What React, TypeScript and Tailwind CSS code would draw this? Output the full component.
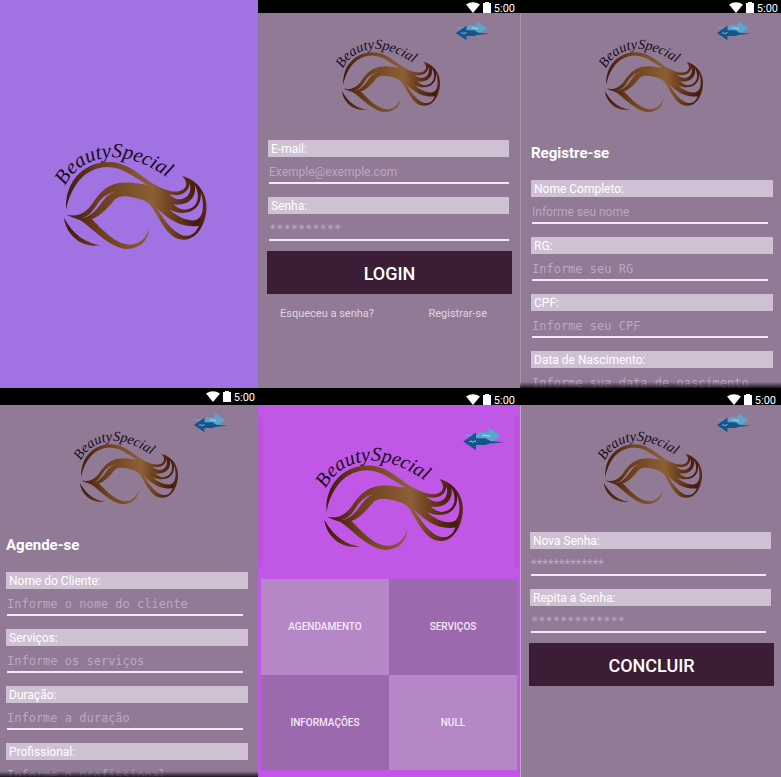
import { useId } from "react";
import type { ReactNode } from "react";

const roboto = "font-[Roboto,'Liberation_Sans',sans-serif]";
const mono = "font-['DejaVu_Sans_Mono','Liberation_Mono',monospace] text-[12px]";

function Logo({ className }: { className: string }) {
  const id = useId();
  const arc = `${id}-arc`;
  const bronze = `${id}-bronze`;
  const fill = `url(#${bronze})`;
  return (
    <svg viewBox="30 30 480 340" className={`overflow-visible ${className}`} role="img" aria-label="BeautySpecial">
      <defs>
        <linearGradient id={bronze} gradientUnits="userSpaceOnUse" x1="68" y1="0" x2="500" y2="0">
          <stop offset="0" stopColor="#3f180c" />
          <stop offset="0.25" stopColor="#6b3d1c" />
          <stop offset="0.62" stopColor="#8c6036" />
          <stop offset="0.8" stopColor="#613315" />
          <stop offset="0.93" stopColor="#45190f" />
          <stop offset="1" stopColor="#5c2c18" />
        </linearGradient>
        <path id={arc} d="M72 168 C102 108 160 82 222 82 C288 86 336 112 420 170" />
      </defs>
      <text className="font-['Liberation_Serif',serif] text-[62px] italic" fill="#150c18">
        <textPath href={`#${arc}`}>BeautySpecial</textPath>
      </text>
      <path
        fill={fill}
        fillRule="evenodd"
        d="M76 255 C112 262 134 248 152 224 C178 184 204 159 250 158 C282 157 300 164 318 164
           C280 142 246 112 200 111 C130 112 88 170 75 240 C69 166 118 96 205 96
           C265 97 302 142 345 166 C380 184 408 192 428 178 C442 166 436 150 424 138
           C472 150 500 192 497 238 C495 270 482 300 464 316 C447 331 425 334 405 325
           C375 310 358 272 338 240 C328 222 318 214 300 209 C268 198 238 194 222 208
           C196 238 168 274 124 273 C106 268 92 262 76 255 Z
           M118 266 C150 262 166 240 182 218 C196 200 206 190 226 184 C200 190 186 200 172 218 C156 242 146 260 118 266 Z
           M384 193 C414 202 442 192 447 162 C454 192 436 212 408 208 C398 204 392 200 384 193 Z
           M398 224 C440 228 468 206 462 166 C482 202 470 238 430 240 C416 238 406 232 398 224 Z
           M386 240 C430 262 484 246 480 188 C492 226 490 272 456 272 C426 270 404 256 386 240 Z
           M346 234 C386 272 424 296 474 288 C466 312 446 322 426 317 C392 306 368 266 346 234 Z"
      />
      <path
        fill={fill}
        d="M116 270 C156 296 200 352 256 358 C298 357 322 332 325 297 C312 332 290 345 264 345
           C222 343 184 300 152 268 Z"
      />
      <path fill={fill} d="M68 264 C76 318 122 356 180 347 C138 342 98 318 68 264 Z" />
    </svg>
  );
}

function Arrows({ className }: { className: string }) {
  return (
    <svg viewBox="0 0 110 60" className={className} role="img" aria-label="Trocar">
      <path fill="#5aa6cf" d="M0 19 L45 19 V13 H71 V0 L102 22 L71 44 V33 H34 L32 25 Z" />
      <path fill="#14568c" d="M8 36 L40 14 V28 H64 L76 35 L110 38 L72 42 L64 45 H40 V58 Z" />
      <path fill="none" stroke="#dff1f8" strokeWidth="2" d="M56 22 l5 -2 l4 3 l5 -2 l5 3 M24 37 l4 -2 l3 3 l5 -2 l4 -1" />
    </svg>
  );
}

function StatusBar({ className }: { className: string }) {
  return (
    <div className={`flex shrink-0 items-end justify-end gap-[3px] bg-black text-white ${className}`}>
      <svg viewBox="0 0 14 11" className="h-[11px] w-[14px]" fill="white" aria-hidden="true">
        <path d="M0 2.500 Q7 -2 14 2.500 L7 11 Z" />
      </svg>
      <svg viewBox="0 0 8 11" className="h-[11px] w-2" fill="white" aria-hidden="true">
        <path d="M2 0 H6 V1 H8 V11 H0 V1 H2 Z" />
      </svg>
      <span className="text-[11px] leading-[9px]">5:00</span>
    </div>
  );
}

function Header({ shift = "pr-[3px]" }: { shift?: string }) {
  return (
    <div className="grid pb-[25px]">
      <div className={`col-start-1 row-start-1 flex justify-center pt-6 ${shift}`}>
        <Logo className="h-[78px] w-[110px]" />
      </div>
      <div className="col-start-1 row-start-1 flex items-start justify-end pt-2 pr-[30px]">
        <Arrows className="h-5 w-[37px]" />
      </div>
    </div>
  );
}

type FieldProps = {
  label: string;
  hint: string;
  type?: string;
  wide?: boolean;
  plain?: boolean;
};

function Field({ label, hint, type = "text", wide = false, plain = false }: FieldProps) {
  const id = useId();
  const plainSize = type === "password" ? "text-[13px]" : "text-[12px]";
  return (
    <div className="mb-[13px] flex shrink-0 flex-col">
      <label htmlFor={id} className="h-[17px] bg-[#d0c0d4] pl-[3px] text-[12px] leading-[18px] text-white">
        {label}
      </label>
      <div className={`flex pl-px ${wide ? "" : "pr-[5px]"}`}>
        <input
          id={id}
          type={type}
          placeholder={hint}
          className={`h-[27px] w-full min-w-0 border-b-2 border-[#f1e9f3] bg-transparent pt-1 text-white outline-none placeholder:text-[#bba8c1] ${
            plain ? plainSize : mono
          }`}
        />
      </div>
    </div>
  );
}

type PhoneProps = { bar: string; edge?: string; children: ReactNode };

function Phone({ bar, edge = "", children }: PhoneProps) {
  return (
    <section className="relative flex min-h-0 min-w-0 flex-col overflow-hidden bg-[#907a95]">
      <StatusBar className={bar} />
      <div className={`min-h-0 flex-1 ${edge}`}>{children}</div>
    </section>
  );
}

function Fade() {
  return <div className="pointer-events-none absolute inset-x-0 bottom-0 h-[6px] bg-linear-to-t from-black/80 to-transparent" />;
}

function Title({ children }: { children: ReactNode }) {
  return <h2 className="mt-[3px] mb-[17px] text-[15px] leading-5 font-bold text-white">{children}</h2>;
}

function Submit({ children }: { children: ReactNode }) {
  return (
    <div className="-mt-[3px] -mr-[3px] -ml-px flex">
      <button type="submit" className="h-[43px] w-full bg-[#3b1d36] pt-[2px] text-[18px] font-medium text-white">
        {children}
      </button>
    </div>
  );
}

function Tile({ className, children }: { className: string; children: ReactNode }) {
  return (
    <button type="button" className={`text-[10px] font-medium text-[#f5e9f8] ${className}`}>
      {children}
    </button>
  );
}

export default function App() {
  return (
    <main className={`grid h-screen grid-cols-[258fr_262fr_261fr] grid-rows-[388fr_389fr] overflow-hidden ${roboto}`}>
      <section className="flex items-center justify-center bg-[#a172e1] pt-1 pl-[3px]">
        <Logo className="h-[113px] w-[160px]" />
      </section>

      <Phone bar="h-[13px] pr-[5px]">
        <Header />
        <form className="flex flex-col pr-[11px] pl-[10px]">
          <Field label="E-mail:" hint="Exemple@exemple.com" type="email" wide plain />
          <Field label="Senha:" hint="**********" type="password" wide />
          <Submit>LOGIN</Submit>
          <nav className="flex justify-between pt-3 pr-[22px] pl-3 text-[11px] leading-4 text-[#e0d5e3]">
            <a href="#senha">Esqueceu a senha?</a>
            <a href="#registro">Registrar-se</a>
          </nav>
        </form>
      </Phone>

      <Phone bar="h-[13px] pr-[3px]" edge="border-l border-[#a39aa3]">
        <Header shift="pr-px" />
        <form className="flex flex-col pr-2 pl-[10px]">
          <Title>Registre-se</Title>
          <Field label="Nome Completo:" hint="Informe seu nome" plain />
          <Field label="RG:" hint="Informe seu RG" />
          <Field label="CPF:" hint="Informe seu CPF" />
          <Field label="Data de Nascimento:" hint="Informe sua data de nascimento" />
        </form>
        <Fade />
      </Phone>

      <Phone bar="h-[17px] pr-[3px] pb-[3px]">
        <Header shift="pr-[7px]" />
        <form className="flex flex-col pr-[10px] pl-[6px]">
          <Title>Agende-se</Title>
          <Field label="Nome do Cliente:" hint="Informe o nome do cliente" />
          <Field label="Serviços:" hint="Informe os serviços" />
          <Field label="Duração:" hint="Informe a duração" />
          <Field label="Profissional:" hint="Informe o profissional" />
        </form>
        <Fade />
      </Phone>

      <section className="flex min-h-0 min-w-0 flex-col bg-[#c157e6]">
        <StatusBar className="h-[17px] pr-[5px]" />
        <div className="grid h-[174px] shrink-0">
          <div className="col-start-1 row-start-1 flex justify-between pt-3 pr-px pb-3">
            <span className="w-[5px] bg-[#bd51da]" />
            <span className="w-[5px] bg-[#bd51da]" />
          </div>
          <div className="col-start-1 row-start-1 flex justify-center pt-[39px]">
            <Logo className="h-[110px] w-[155px]" />
          </div>
          <div className="col-start-1 row-start-1 flex items-start justify-end pt-[22px] pr-4">
            <Arrows className="h-6 w-11" />
          </div>
        </div>
        <nav className="mx-[3px] mb-[7px] grid flex-1 grid-cols-2 grid-rows-2">
          <Tile className="bg-[#b587c7]">AGENDAMENTO</Tile>
          <Tile className="bg-[#9c68ae]">SERVIÇOS</Tile>
          <Tile className="bg-[#9c68ae]">INFORMAÇÕES</Tile>
          <Tile className="bg-[#b587c7]">NULL</Tile>
        </nav>
      </section>

      <Phone bar="h-[17px] pr-[5px]" edge="border-l border-[#c5a3cf]">
        <Header />
        <form className="flex flex-col pr-[10px] pl-[9px]">
          <Field label="Nova Senha:" hint="*************" type="password" plain />
          <Field label="Repita a Senha:" hint="*************" type="password" />
          <Submit>CONCLUIR</Submit>
        </form>
      </Phone>
    </main>
  );
}
